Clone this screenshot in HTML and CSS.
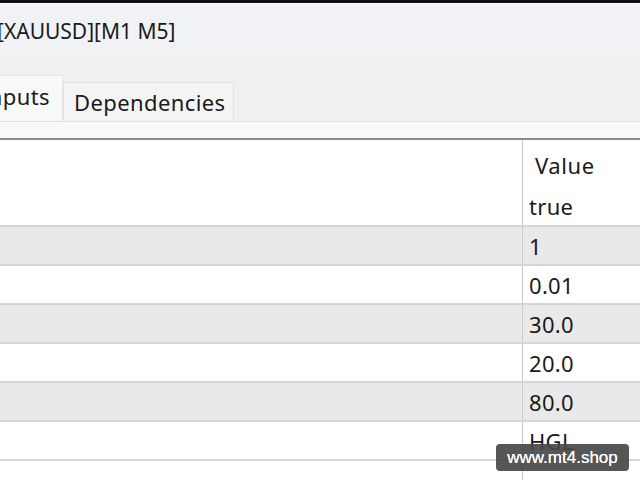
FILE: index.html
```html
<!DOCTYPE html>
<html>
<head>
<meta charset="utf-8">
<link rel="stylesheet" href="styles.css">
</head>
<body>
<div class="window">
  <div class="titlebar"><span class="title">[XAUUSD][M1 M5]</span></div>
  <div class="tabstrip">
    <div class="tab active">Inputs</div>
    <div class="tab">Dependencies</div>
  </div>
  <div class="panel">
    <div class="grid">
      <div class="row head"><div class="name"></div><div class="val">Value</div></div>
      <div class="row first"><div class="name"></div><div class="val">true</div></div>
      <div class="row alt"><div class="name"></div><div class="val">1</div></div>
      <div class="row"><div class="name"></div><div class="val">0.01</div></div>
      <div class="row alt"><div class="name"></div><div class="val">30.0</div></div>
      <div class="row"><div class="name"></div><div class="val">20.0</div></div>
      <div class="row alt"><div class="name"></div><div class="val">80.0</div></div>
      <div class="row"><div class="name"></div><div class="val">HGL</div></div>
      <div class="row rest"><div class="name"></div><div class="val"></div></div>
    </div>
  </div>
  <div class="watermark">www.mt4.shop</div>
</div>
</body>
</html>
```

FILE: styles.css
```css
html, body {
  margin: 0;
  padding: 0;
  width: 640px;
  height: 480px;
  overflow: hidden;
  background: #ffffff;
}

.window {
  position: relative;
  width: 640px;
  height: 480px;
  overflow: hidden;
  font-family: "Noto Sans", "Open Sans", sans-serif;
  color: #1a1a1a;
}

.titlebar {
  height: 54px;
  border-top: 3px solid #111111;
  box-shadow: inset 0 1px 0 #ffffff;
  background: #f1f2f6;
  display: flex;
  align-items: center;
  box-sizing: content-box;
}

.title {
  font-size: 21px;
  margin-left: -3px;
  margin-top: 1px;
}

.tabstrip {
  height: 64px;
  background: #f0f0f0;
  display: flex;
  align-items: flex-end;
}

.tab {
  height: 38px;
  padding: 0 7px 0 10px;
  display: flex;
  align-items: center;
  font-size: 22px;
  letter-spacing: 0.4px;
  background: #f4f4f4;
  border: 1px solid #e2e2e2;
  border-bottom: none;
  box-sizing: border-box;
  margin-bottom: 1px;
  white-space: nowrap;
}

.tab.active {
  flex: none;
  width: 83px;
  height: 46px;
  margin-left: -20px;
  margin-bottom: 0;
  padding: 0 12px 6px 0;
  justify-content: flex-end;
  background: #f9f9f9;
  border-color: #e6e6e6;
}

.panel {
  height: 358px;
  background: #f9f9f9;
  border-top: 1px solid #e0e0e0;
  padding-top: 16px;
  box-sizing: border-box;
}

.grid {
  border-top: 2px solid #8c8c8c;
  background: #ffffff;
  height: 342px;
}

.row {
  display: grid;
  grid-template-columns: 523px 1fr;
  height: 39px;
  border-bottom: 2px solid #d5d5d5;
  box-sizing: border-box;
  font-size: 22px;
  letter-spacing: 0.3px;
}

.row.head {
  height: 47px;
  border-bottom: none;
}

.row.first {
  height: 40px;
}

.row.alt {
  background: #e9e9e9;
}

.row.rest {
  border-bottom: none;
  height: 40px;
}

.name {
  border-right: 1px solid #c9c9c9;
}

.val {
  display: flex;
  align-items: center;
  padding-left: 6px;
  white-space: nowrap;
}

.head .val {
  padding-left: 12px;
  padding-top: 2px;
  letter-spacing: 0.6px;
}

.watermark {
  position: absolute;
  left: 496px;
  top: 444px;
  width: 133px;
  height: 27px;
  border-radius: 4px;
  background: rgba(72, 72, 72, 0.92);
  color: #ffffff;
  font-family: "Liberation Sans", Arial, sans-serif;
  font-size: 17px;
  line-height: 27px;
  text-align: center;
  text-shadow: 0 0 0.5px #ffffff;
}
```
